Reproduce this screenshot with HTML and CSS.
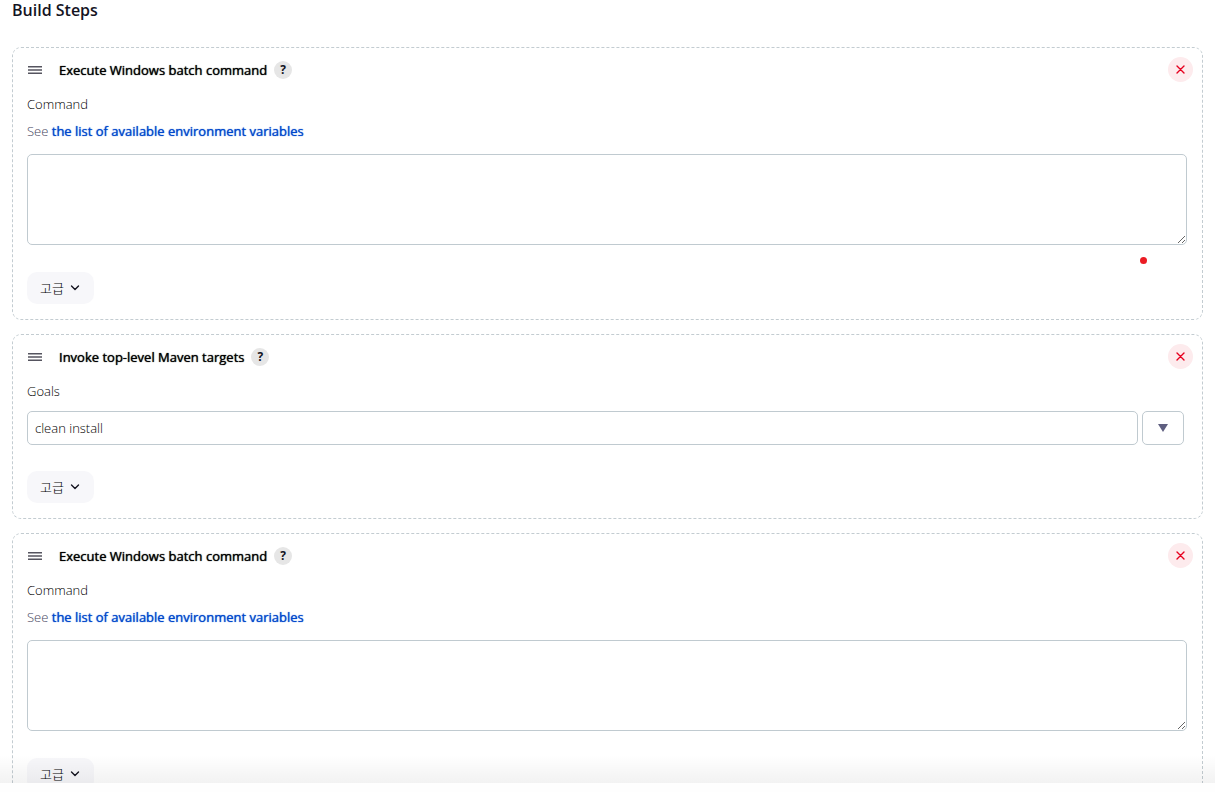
FILE: index.html
```html
<!DOCTYPE html>
<html lang="ko">
<head>
<meta charset="utf-8">
<meta name="viewport" content="width=device-width, initial-scale=1">
<title>Build Steps</title>
<link rel="stylesheet" href="styles.css">
</head>
<body>
<svg class="sprite" aria-hidden="true">
  <symbol id="grip" viewBox="0 0 14 8"><path d="M0 .8h14M0 4h14M0 7.200h14" stroke="#55545f" stroke-width="1.5"/></symbol>
  <symbol id="close" viewBox="0 0 9 9"><path d="M1 1l7 7M8 1l-7 7" stroke="#e6001f" stroke-width="1.4" stroke-linecap="round"/></symbol>
  <symbol id="chevron" viewBox="0 0 10 6"><path d="M1.500 1L5 4.500 8.500 1" fill="none" stroke="#14141f" stroke-width="1.4" stroke-linecap="round" stroke-linejoin="round"/></symbol>
  <symbol id="triangle" viewBox="0 0 10 8"><path d="M0 0h10L5 8z" fill="#5f5f80"/></symbol>
</svg>
<main class="steps">
  <h1 class="steps-title">Build Steps</h1>

  <section class="card">
    <header class="card-head">
      <svg class="grip"><use href="#grip"/></svg>
      <h2 class="card-title">Execute Windows batch command</h2>
      <button class="help" type="button">?</button>
      <button class="delete" type="button" aria-label="Delete"><svg class="close"><use href="#close"/></svg></button>
    </header>
    <label class="label" for="command-1">Command</label>
    <p class="hint">See <a class="link" href="#">the list of available environment variables</a></p>
    <textarea class="command" id="command-1"></textarea>
    <button class="advanced" type="button">고급<svg class="chevron"><use href="#chevron"/></svg></button>
    <span class="marker"></span>
  </section>

  <section class="card">
    <header class="card-head">
      <svg class="grip"><use href="#grip"/></svg>
      <h2 class="card-title">Invoke top-level Maven targets</h2>
      <button class="help" type="button">?</button>
      <button class="delete" type="button" aria-label="Delete"><svg class="close"><use href="#close"/></svg></button>
    </header>
    <label class="label" for="goals">Goals</label>
    <div class="goals">
      <input class="goals-input" id="goals" type="text" value="clean install">
      <button class="expand" type="button" aria-label="Expand"><svg class="triangle"><use href="#triangle"/></svg></button>
    </div>
    <button class="advanced" type="button">고급<svg class="chevron"><use href="#chevron"/></svg></button>
  </section>

  <section class="card">
    <header class="card-head">
      <svg class="grip"><use href="#grip"/></svg>
      <h2 class="card-title">Execute Windows batch command</h2>
      <button class="help" type="button">?</button>
      <button class="delete" type="button" aria-label="Delete"><svg class="close"><use href="#close"/></svg></button>
    </header>
    <label class="label" for="command-2">Command</label>
    <p class="hint">See <a class="link" href="#">the list of available environment variables</a></p>
    <textarea class="command" id="command-2"></textarea>
    <button class="advanced" type="button">고급<svg class="chevron"><use href="#chevron"/></svg></button>
  </section>
</main>
<footer class="bottom-bar"></footer>
</body>
</html>
```

FILE: styles.css
```css
* {
  box-sizing: border-box;
}

body {
  display: flex;
  flex-direction: column;
  height: 100vh;
  margin: 0;
  background: #fff;
  color: #14141f;
  font-family: "Open Sans", "Noto Sans CJK KR", sans-serif;
  font-size: 13px;
  font-weight: 300;
}

button,
input,
textarea {
  font: inherit;
  color: inherit;
}

button {
  display: flex;
  align-items: center;
  justify-content: center;
  padding: 0;
  border: 0;
  cursor: pointer;
}

.sprite {
  display: none;
}

.steps {
  flex: 1;
  min-height: 0;
  padding: 0 12px;
  overflow: auto;
  scrollbar-width: none;
}

.steps-title {
  margin: 0 0 27px;
  font-size: 16px;
  font-weight: 600;
  line-height: 20px;
}

.card {
  position: relative;
  margin-bottom: 14px;
  padding: 9px 15px 15px 14px;
  border: 1px dashed #c3ccd1;
  border-radius: 9px;
}

.card-head {
  display: flex;
  align-items: center;
  height: 25px;
  margin: 0 -6px 12px 1px;
}

.grip {
  width: 14px;
  height: 8px;
}

.card-title {
  margin: 0 7px 0 17px;
  font-size: 13px;
  font-weight: 500;
  line-height: 20px;
  color: #000;
  text-shadow: 0 0 1px currentColor;
}

.help {
  width: 18px;
  height: 18px;
  border-radius: 50%;
  background: #e6e6e6;
  font-size: 12px;
  font-weight: 700;
}

.delete {
  width: 25px;
  height: 25px;
  margin-left: auto;
  border-radius: 50%;
  background: #fdebed;
}

.close {
  width: 9px;
  height: 9px;
}

.label {
  display: block;
  color: #000;
  line-height: 20px;
}

.hint {
  margin: 7px 0 13px;
  color: #45455e;
  line-height: 20px;
}

.link {
  color: #0048cc;
  font-weight: 500;
  text-decoration: none;
  text-shadow: 0 0 1px currentColor;
}

.command {
  display: block;
  width: 100%;
  height: 91px;
  margin-bottom: 27px;
  padding: 8px;
  border: 1px solid #c0cad0;
  border-radius: 5px;
  background: #fff;
  resize: vertical;
}

.goals {
  display: flex;
  gap: 4px;
  margin: 10px 3px 26px 0;
}

.goals-input {
  flex: 1;
  min-width: 0;
  height: 34px;
  padding: 0 7px;
  border: 1px solid #c0cad0;
  border-radius: 5px;
  color: #000;
}

.expand {
  width: 42px;
  height: 34px;
  border: 1px solid #c0cad0;
  border-radius: 5px;
  background: #fff;
}

.triangle {
  width: 10px;
  height: 8px;
}

.advanced {
  gap: 6px;
  width: 67px;
  height: 32px;
  padding-right: 1px;
  border-radius: 10px;
  background: #f7f7fa;
  color: #000;
  font-family: "Noto Sans CJK KR", sans-serif;
  line-height: 20px;
}

.chevron {
  width: 10px;
  height: 6px;
}

.marker {
  position: absolute;
  right: 55px;
  bottom: 55px;
  width: 7px;
  height: 7px;
  border-radius: 50%;
  background: #eb1c24;
}

.bottom-bar {
  position: relative;
  height: 9px;
  background: #fefefe;
}

.bottom-bar::before {
  content: "";
  position: absolute;
  right: 0;
  bottom: 100%;
  left: 0;
  height: 28px;
  background: linear-gradient(rgba(0, 0, 0, 0), rgba(0, 0, 0, 0.05));
  pointer-events: none;
}
```
